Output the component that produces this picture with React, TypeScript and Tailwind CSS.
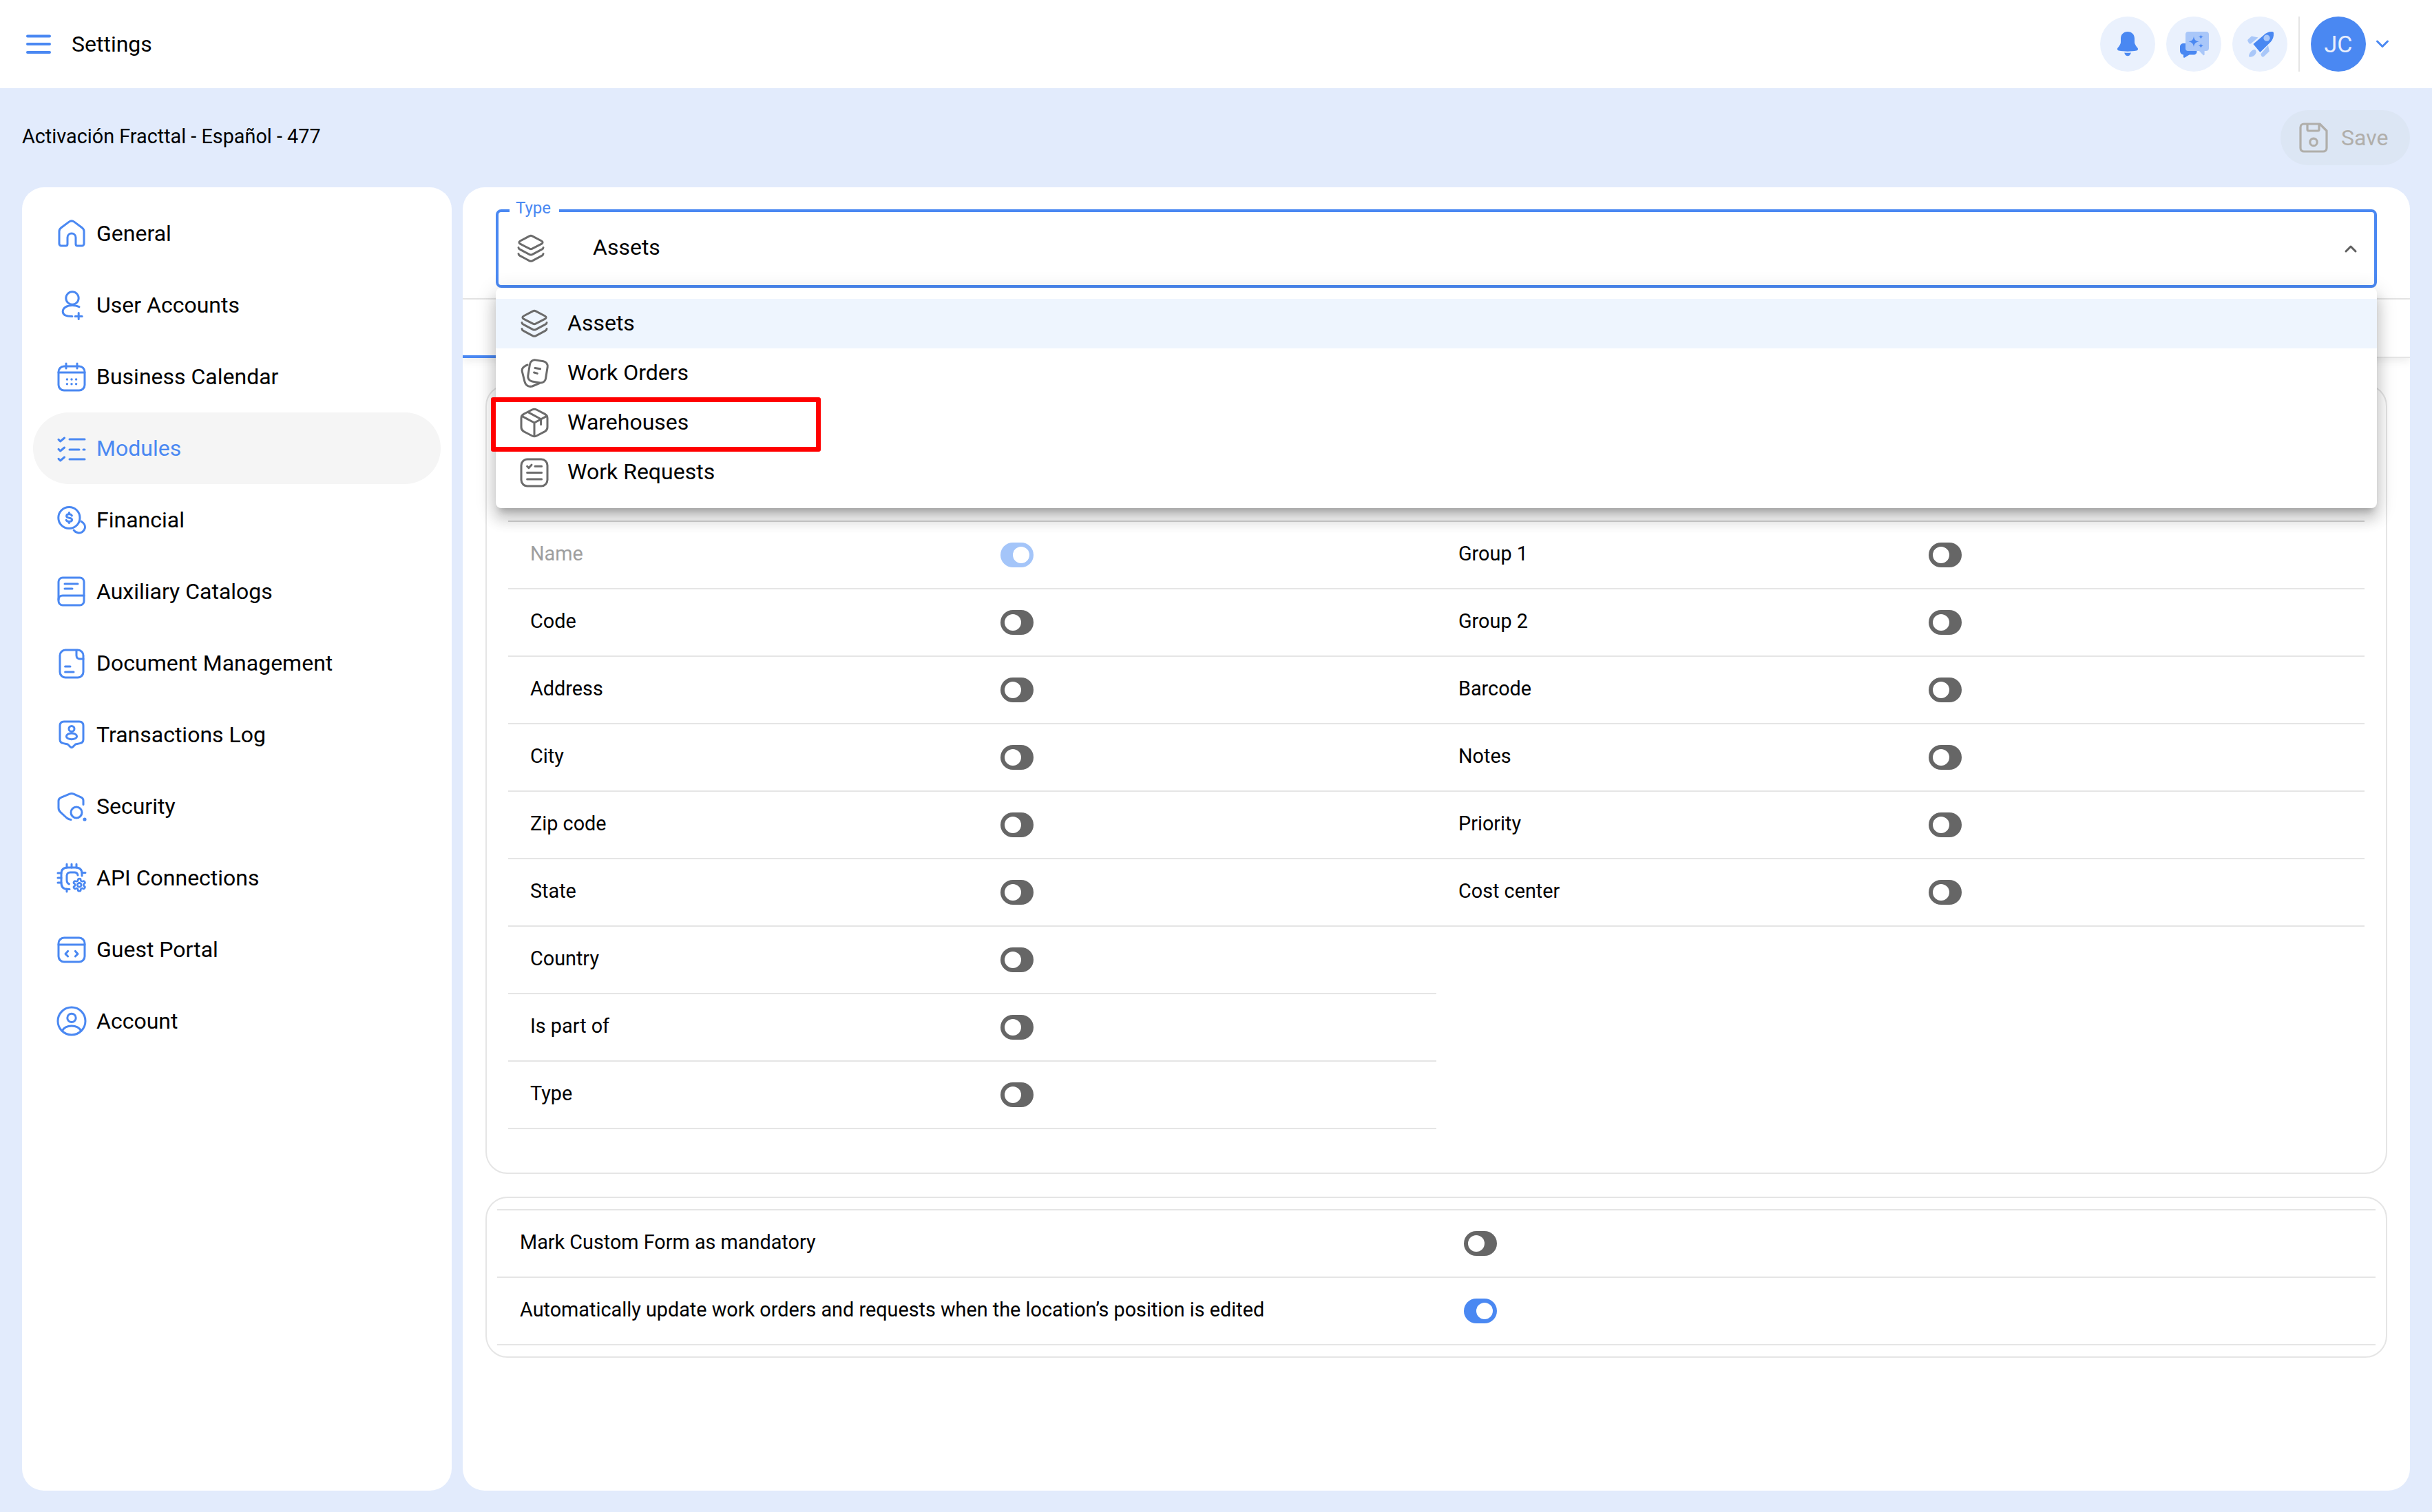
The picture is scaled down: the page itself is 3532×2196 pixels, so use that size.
import React from "react";

const BLUE = "#4a88f2";

function Ico({ children, color = BLUE, sw = 1.5, cls = "" }: { children: React.ReactNode; color?: string; sw?: number; cls?: string }) {
  return (
    <svg viewBox="0 0 24 24" fill="none" stroke={color} strokeWidth={sw} strokeLinecap="round" strokeLinejoin="round" className={"w-[48px] h-[48px] shrink-0 " + cls}>
      {children}
    </svg>
  );
}

const COG = "M12.22 2h-.44a2 2 0 0 0-2 2v.18a2 2 0 0 1-1 1.73l-.43.25a2 2 0 0 1-2 0l-.15-.08a2 2 0 0 0-2.73.73l-.22.38a2 2 0 0 0 .73 2.73l.15.1a2 2 0 0 1 1 1.72v.51a2 2 0 0 1-1 1.74l-.15.09a2 2 0 0 0-.73 2.73l.22.38a2 2 0 0 0 2.73.73l.15-.08a2 2 0 0 1 2 0l.43.25a2 2 0 0 1 1 1.73V20a2 2 0 0 0 2 2h.44a2 2 0 0 0 2-2v-.18a2 2 0 0 1 1-1.73l.43-.25a2 2 0 0 1 2 0l.15.08a2 2 0 0 0 2.73-.73l.22-.39a2 2 0 0 0-.73-2.73l-.15-.08a2 2 0 0 1-1-1.74v-.5a2 2 0 0 1 1-1.74l.15-.09a2 2 0 0 0 .73-2.73l-.22-.38a2 2 0 0 0-2.73-.73l-.15.08a2 2 0 0 1-2 0l-.43-.25a2 2 0 0 1-1-1.73V4a2 2 0 0 0-2-2z";

const navIcons: Record<string, React.ReactNode> = {
  General: (
    <path d="M3 10.5C3 9.5 3.5 8.6 4.4 7.9L10 3.7C11.2 2.8 12.8 2.8 14 3.7L19.6 7.9C20.5 8.6 21 9.5 21 10.5V19.5C21 20.3 20.3 21 19.5 21H16.2C15.5 21 15 20.5 15 19.8V15C15 13.3 13.7 12 12 12C10.3 12 9 13.3 9 15V19.8C9 20.5 8.5 21 7.8 21H4.5C3.7 21 3 20.3 3 19.5Z" />
  ),
  "User Accounts": (
    <>
      <circle cx="12.5" cy="7" r="4.6" />
      <path d="M17.5 13.4C16.2 12.6 14.5 12.2 12.5 12.2C8.5 12.2 5.6 14.2 5.6 16.7C5.6 19 8 20.2 12.4 20.2" />
      <path d="M14.6 20.2H19.6M17.1 17.7V22.3" />
    </>
  ),
  "Business Calendar": (
    <>
      <rect x="2.5" y="4.5" width="19" height="17.5" rx="4" />
      <path d="M8 2.5V6M16 2.5V6M2.5 9H21.5" />
      <g fill={BLUE} stroke="none">
        <circle cx="8.7" cy="14" r=".85" />
        <circle cx="12" cy="14" r=".85" />
        <circle cx="15.3" cy="14" r=".85" />
        <circle cx="8.7" cy="17.4" r=".85" />
        <circle cx="12" cy="17.4" r=".85" />
        <circle cx="15.3" cy="17.4" r=".85" />
      </g>
    </>
  ),
  Modules: (
    <>
      <path d="M2.5 5.7L3.8 7L6.8 4.5M2.5 12.7L3.8 14L6.8 11.5M2.5 19.7L3.8 21L6.8 18.5" />
      <path d="M10.5 5.5H21.5M10.5 13H17.5M20.5 13H21.5M10.5 20H21.5" />
    </>
  ),
  Financial: (
    <>
      <circle cx="10.2" cy="10.5" r="7.8" />
      <path d="M12.2 9C11.8 8.2 11 7.9 10.2 7.9C9 7.9 8.3 8.5 8.3 9.3C8.3 11.3 12.3 10 12.3 12C12.3 12.9 11.4 13.3 10.2 13.3C9.3 13.3 8.5 12.9 8.1 12.2M10.2 6.8V7.9M10.2 13.3V14.3" />
      <path d="M19 13.2C21 14.3 22.1 16.3 21.6 18.2C21 20.4 19 21.8 17 21.5C15.6 21.3 14.3 20.6 13.6 19.5" />
    </>
  ),
  "Auxiliary Catalogs": (
    <>
      <rect x="2.5" y="2" width="18.5" height="20" rx="3" />
      <path d="M7 6.5H16.5M7 10H12.5M2.5 18C2.5 15.8 3.6 15 5.5 15H21" />
    </>
  ),
  "Document Management": (
    <>
      <rect x="3.5" y="2.5" width="17" height="20" rx="4" />
      <path d="M15.5 3V6.5C15.5 8 16.5 9 18 9H20.5M7.3 14.5H11M7.3 18.5H13.5" />
    </>
  ),
  "Transactions Log": (
    <>
      <path d="M6.5 2.5H17.5C19.5 2.5 20.5 3.5 20.5 5.5V15.5C20.5 17 19.5 18 18 18.3L14.8 19L13 20.8C12.4 21.5 11.6 21.5 11 20.8L9.2 19L6 18.3C4.5 18 3.5 17 3.5 15.5V5.5C3.5 3.5 4.5 2.5 6.5 2.5Z" />
      <circle cx="12" cy="7.7" r="2" />
      <ellipse cx="12" cy="13.2" rx="3.8" ry="2.2" />
    </>
  ),
  Security: (
    <>
      <path d="M20.5 10.8V7.8C20.5 6.8 20 6.1 19 5.6L13.5 3.1C12.5 2.7 11.5 2.7 10.5 3.1L4.5 5.6C3.3 6.1 2.5 6.9 2.5 8V13.2C2.5 14.5 3 15.5 4.2 16.6L8.5 20.5C9.5 21.3 10.5 21.7 11.5 21.7" />
      <circle cx="15.5" cy="16.5" r="4" />
      <circle cx="21.5" cy="21.5" r=".55" fill={BLUE} />
    </>
  ),
  "API Connections": (
    <>
      <path d="M10.5 20.2H9C6 20.2 4.5 18.5 4.5 15.5V9C4.5 6 6 4.5 9 4.5H15C18 4.5 19.5 6 19.5 9V10.5" />
      <path d="M10.2 16.5C9 16 8.5 15 8.5 13.5V10.5C8.5 9 9.5 8 11 8H14C15.3 8 16.3 8.8 16.5 10" />
      <path d="M8.5 2V4.5M12 2V4.5M15.5 2V4.5M2 8.5H4.5M2 12H4.5M2 15.5H4.5M19.5 8.2H22M8.5 20V22" />
      <svg x="12.2" y="11.7" width="10.8" height="10.8" viewBox="0 0 24 24" strokeWidth="3">
        <path d={COG} />
        <circle cx="12" cy="12" r="3.2" />
      </svg>
    </>
  ),
  "Guest Portal": (
    <>
      <rect x="2.5" y="3.5" width="19" height="17.5" rx="4" />
      <path d="M2.5 8.5H21.5M9.3 13.2L7.5 15.2L9.3 17M14.7 13.2L16.5 15.2L14.7 17" />
    </>
  ),
  Account: (
    <>
      <circle cx="12" cy="12" r="10" />
      <circle cx="12" cy="9.7" r="3.1" />
      <path d="M5.2 19C6.5 16.6 9 15.5 12 15.5C15 15.5 17.5 16.6 18.8 19" />
    </>
  ),
};

const GRAY = "#6b6b6b";
const LayersIcon = () => (
  <Ico color={GRAY}>
    <path d="M11 2.9C11.6 2.6 12.4 2.6 13 2.9L19.8 6.5C20.8 7 20.8 8.1 19.8 8.6L13 12.1C12.4 12.4 11.6 12.4 11 12.1L4.2 8.6C3.2 8.1 3.2 7 4.2 6.5Z" />
    <path d="M3 11.2C3 11.8 3.4 12.3 4 12.6L11 16.3C11.6 16.6 12.4 16.6 13 16.3L20 12.6C20.6 12.3 21 11.8 21 11.2" />
    <path d="M3 15.8C3 16.4 3.4 16.9 4 17.2L11 20.9C11.6 21.2 12.4 21.2 13 20.9L20 17.2C20.6 16.9 21 16.4 21 15.8" />
  </Ico>
);
const OrdersIcon = () => (
  <Ico color={GRAY}>
    <rect x="8" y="2.8" width="13" height="15.8" rx="3.6" transform="rotate(9 14.5 10.7)" />
    <path d="M7 6C4 7 2.6 8.6 3.2 11L5 18.2C5.6 20.8 8 22.2 10.5 21.5L15.5 19.4" />
    <path d="M12.5 8.2L16.3 8.9M11.8 11.5L14.2 12.2" />
  </Ico>
);
const BoxIcon = () => (
  <Ico color={GRAY}>
    <path d="M10.4 2.5C11.4 2 12.6 2 13.6 2.5L19.7 5.7C20.9 6.4 21.5 7.4 21.5 8.7V15.3C21.5 16.6 20.9 17.6 19.7 18.3L13.6 21.5C12.6 22 11.4 22 10.4 21.5L4.3 18.3C3.1 17.6 2.5 16.6 2.5 15.3V8.7C2.5 7.4 3.1 6.4 4.3 5.7Z" />
    <path d="M3 7.2L12 12L21 7.2M12 12V21.8M7.5 4.3L16.8 9.4V13.2" />
  </Ico>
);
const RequestsIcon = () => (
  <Ico color={GRAY}>
    <rect x="2.5" y="2.5" width="19" height="19.5" rx="4.5" />
    <path d="M6.8 7.6L8 8.8L10 6.6M12.5 7.6H17.3M6.8 12.3H17.3M6.8 17H17.3" />
  </Ico>
);

const nav = ["General", "User Accounts", "Business Calendar", "Modules", "Financial", "Auxiliary Catalogs", "Document Management", "Transactions Log", "Security", "API Connections", "Guest Portal", "Account"];

function Toggle({ on = false, dim = false }: { on?: boolean; dim?: boolean }) {
  const bg = dim ? "bg-[#a4c5f9]" : on ? "bg-[#4a88f2]" : "bg-[#666666]";
  return (
    <span className={"w-[48px] h-[36px] rounded-full flex items-center px-[6px] shrink-0 " + bg + (on ? " justify-end" : " justify-start")}>
      <span className="w-[24px] h-[24px] rounded-full bg-white" />
    </span>
  );
}

function Row({ label, dim = false, on = false }: { label: string; dim?: boolean; on?: boolean }) {
  return (
    <div className="h-[98px] border-b-2 border-[#e5e5e5] flex items-center">
      <span className={"w-[715px] pl-[32px] mb-[2px] text-[28.8px] " + (dim ? "text-[#9e9e9e]" : "text-black")}>{label}</span>
      <Toggle on={on} dim={dim} />
    </div>
  );
}

function SettingRow({ label, on = false }: { label: string; on?: boolean }) {
  return (
    <div className="h-[98px] border-b-2 border-[#e5e5e5] flex items-center">
      <span className="w-[1404px] pl-[33px] text-[28.8px] text-black mb-[2px]">{label}</span>
      <Toggle on={on} />
    </div>
  );
}

const left = ["Code", "Address", "City", "Zip code", "State", "Country", "Is part of", "Type"];
const right = ["Group 1", "Group 2", "Barcode", "Notes", "Priority", "Cost center"];

const options = [
  { label: "Assets", icon: <LayersIcon />, active: true },
  { label: "Work Orders", icon: <OrdersIcon /> },
  { label: "Warehouses", icon: <BoxIcon /> },
  { label: "Work Requests", icon: <RequestsIcon /> },
];

export default function App() {
  return (
    <div className="w-full h-[2196px] bg-[#e2ebfc] flex flex-col overflow-hidden font-['Roboto',sans-serif] text-black">
      <header className="h-[128px] bg-white flex items-center pl-[32px] pr-[60px] shrink-0">
        <svg viewBox="0 0 24 24" fill="none" stroke={BLUE} strokeWidth="2" strokeLinecap="round" className="w-[48px] h-[48px]">
          <path d="M4 6.2H20M4 12H20M4 18H20" />
        </svg>
        <span className="ml-[24px] text-[32px]">Settings</span>
        <div className="ml-auto flex items-center gap-[16px]">
          <span className="w-[80px] h-[80px] rounded-full bg-[#eaf1fd] flex items-center justify-center">
            <svg viewBox="0 0 24 24" fill={BLUE} className="w-[48px] h-[48px]">
              <path d="M12 3C8.9 3 7 5.2 7 8V10.6C7 12 5.6 13.8 4.7 14.9C4.2 15.6 4.6 16.6 5.5 16.8C9.5 17.5 14.5 17.5 18.5 16.8C19.4 16.6 19.8 15.6 19.3 14.9C18.4 13.8 17 12 17 10.6V8C17 5.2 15.1 3 12 3Z" />
              <path d="M9.6 18.2C11 18.5 13 18.5 14.4 18.2C14 20 13 20.6 12 20.6C11 20.6 10 20 9.6 18.2Z" />
            </svg>
          </span>
          <span className="w-[80px] h-[80px] rounded-full bg-[#eaf1fd] flex items-center justify-center">
            <svg viewBox="0 0 24 24" className="w-[48px] h-[48px]">
              <path fill="#a9c7f9" d="M8 3H21C22.2 3 23 3.8 23 5V15C23 16.2 22.2 17 21 17H19.8V19.5C19.8 20 19.2 20.3 18.8 20L16 17H8C6.8 17 6 16.2 6 15V5C6 3.8 6.8 3 8 3Z" />
              <path fill={BLUE} d="M4.5 11.5H6V15C6 16.3 6.8 17 8 17H14.2C14.5 18.6 13.4 19.8 11.8 19.8H8.8L5.5 21.7C5 22 4.5 21.7 4.5 21.2V19.8C3 19.6 2 18.5 2 17V14C2 12.6 3 11.5 4.5 11.5Z" />
              <path fill={BLUE} d="M12 6.4C12.4 8.9 13.3 9.8 15.8 10.2C13.3 10.6 12.4 11.5 12 14C11.6 11.5 10.7 10.6 8.2 10.2C10.7 9.8 11.6 8.9 12 6.4Z" />
              <path fill={BLUE} d="M17.2 5C17.4 6.2 17.8 6.6 19 6.8C17.8 7 17.4 7.4 17.2 8.6C17 7.4 16.6 7 15.4 6.8C16.6 6.6 17 6.2 17.2 5Z" />
              <path fill={BLUE} d="M17.2 11.4C17.4 12.6 17.8 13 19 13.2C17.8 13.4 17.4 13.8 17.2 15C17 13.8 16.6 13.4 15.4 13.2C16.6 13 17 12.6 17.2 11.4Z" />
            </svg>
          </span>
          <span className="w-[80px] h-[80px] rounded-full bg-[#eaf1fd] flex items-center justify-center">
            <svg viewBox="0 0 24 24" className="w-[48px] h-[48px]">
              <path fill="#a9c7f9" d="M6 6.3L10.8 7.2L5.6 11.6C5 12 4.4 11.9 4 11.3L3.3 10C3 9.5 3 9 3.4 8.6Z" />
              <path fill="#a9c7f9" d="M18 13L18.9 17.2L15 21C14.4 21.5 13.6 21.4 13.2 20.8L12.6 19.3Z" />
              <path fill="#a9c7f9" d="M8.5 16C9.5 16.8 9.6 18 9 19C8 20.8 6 21.5 4.8 21.4C4.2 21.3 4 21 4 20.5C4.3 18.5 6.3 15.5 8.5 16Z" />
              <path fill={BLUE} d="M21 3C18.5 2.9 16.3 3.9 14.7 5.6L7.2 12L12.2 18L19.8 10.5C21.5 8.8 22.2 6.5 22 4C22 3.4 21.6 3 21 3Z" />
              <circle cx="17" cy="7.6" r="2.3" fill="#a9c7f9" />
            </svg>
          </span>
          <span className="w-[2px] h-[80px] bg-[#e5e5e5]" />
          <span className="w-[80px] h-[80px] rounded-full bg-[#4a88f2] text-[#e8eefc] text-[34px] flex items-center justify-center">JC</span>
        </div>
        <svg viewBox="0 0 24 24" fill="none" stroke={BLUE} strokeWidth="3" strokeLinecap="round" strokeLinejoin="round" className="ml-[12px] w-[24px] h-[24px]">
          <path d="M4.5 8L12 15.5L19.5 8" />
        </svg>
      </header>

      <div className="h-[144px] flex items-center justify-between px-[32px] shrink-0">
        <span className="text-[28.8px] mb-[2px]">Activación Fracttal - Español - 477</span>
        <button className="h-[80px] w-[188px] rounded-full bg-[#dce6f4] flex items-center pl-[24px] gap-[16px] text-[32px] text-[#b0aeaa]">
          <svg viewBox="0 0 24 24" fill="none" stroke="#b0aeaa" strokeWidth="1.6" strokeLinejoin="round" className="w-[48px] h-[48px]">
            <path d="M5 2H16.5L21.5 7V19.5C21.5 20.9 20.4 22 19 22H5C3.6 22 2.5 20.9 2.5 19.5V4.5C2.5 3.1 3.6 2 5 2Z" />
            <path d="M7.5 2V6C7.5 6.6 8 7 8.5 7H15C15.5 7 16 6.6 16 6V2" />
            <circle cx="12" cy="15.2" r="2.6" />
          </svg>
          Save
        </button>
      </div>

      <div className="flex-1 flex gap-[16px] px-[32px] pb-[31px] min-h-0">
        <aside className="w-[624px] bg-white rounded-[32px] px-[16px] pt-[15px] shrink-0">
          {nav.map((n) => (
            <div key={n} className={"h-[104px] rounded-full flex items-center pl-[32px] gap-[12px] text-[32px] " + (n === "Modules" ? "bg-[#f5f5f5] text-[#4a88f2]" : "text-black")}>
              <Ico>{navIcons[n]}</Ico>
              <span>{n}</span>
            </div>
          ))}
        </aside>

        <main className="flex-1 bg-white rounded-[32px] overflow-hidden flex flex-col">
          <div className="h-[163px] border-b-2 border-[#e5e5e5] pt-[32px] px-[48px] shrink-0">
            <div className="relative h-[114px] border-4 border-[#4a88f2] rounded-[8px] flex items-center pl-[23px] pr-[22px] z-20">
              <span className="absolute left-[16px] top-[-24px] h-[36px] pl-[9px] pr-[12px] bg-white flex items-center text-[24px] text-[#4a88f2]">Type</span>
              <LayersIcon />
              <span className="ml-[66px] mb-[4px] text-[32px]">Assets</span>
              <svg viewBox="0 0 24 24" fill="none" stroke="#5f5f5f" strokeWidth="3" strokeLinecap="round" strokeLinejoin="round" className="ml-auto w-[24px] h-[24px]">
                <path d="M5 16L12 9L19 16" />
              </svg>
              <div className="absolute left-[-4px] right-[-4px] top-[110px] bg-white rounded-[8px] py-[16px] shadow-[0_10px_10px_-6px_rgba(0,0,0,0.2),0_16px_20px_2px_rgba(0,0,0,0.14),0_6px_28px_4px_rgba(0,0,0,0.12)]">
                {options.map((o) => (
                  <div key={o.label} className={"h-[72px] flex items-center pl-[32px] gap-[24px] text-[32px] " + (o.active ? "bg-[#eef5fe]" : "")}>
                    {o.icon}
                    <span className="mb-[2px]">{o.label}</span>
                  </div>
                ))}
                <div className="absolute left-[-7px] top-[159px] w-[479px] h-[79px] border-[7px] border-[#ff0000] rounded-[3px]" />
              </div>
            </div>
          </div>
          <div className="h-[85px] border-b-2 border-[#e5e5e5] shadow-[0_4px_12px_rgba(0,0,0,0.08)] flex items-end shrink-0">
            <div className="w-[400px] h-[4px] bg-[#4a88f2] translate-y-[2px]" />
          </div>

          <div className="px-[33px] pt-[38px] flex flex-col gap-[33px]">
            <section className="h-[1147px] border-2 border-[#e5e5e5] rounded-[32px] px-[31px]">
              <div className="h-[198px] border-b-2 border-[#d4d4d4]" />
              <div className="grid grid-cols-2">
                <div>
                  <Row label="Name" dim on />
                  {left.map((l) => (
                    <Row key={l} label={l} />
                  ))}
                </div>
                <div>
                  {right.map((r) => (
                    <Row key={r} label={r} />
                  ))}
                </div>
              </div>
            </section>
            <section className="h-[234px] border-2 border-[#e5e5e5] rounded-[32px] px-[15px] pt-[16px]">
              <div className="border-t-2 border-[#e5e5e5]">
                <SettingRow label="Mark Custom Form as mandatory" />
                <SettingRow label="Automatically update work orders and requests when the location’s position is edited" on />
              </div>
            </section>
          </div>
        </main>
      </div>
    </div>
  );
}
